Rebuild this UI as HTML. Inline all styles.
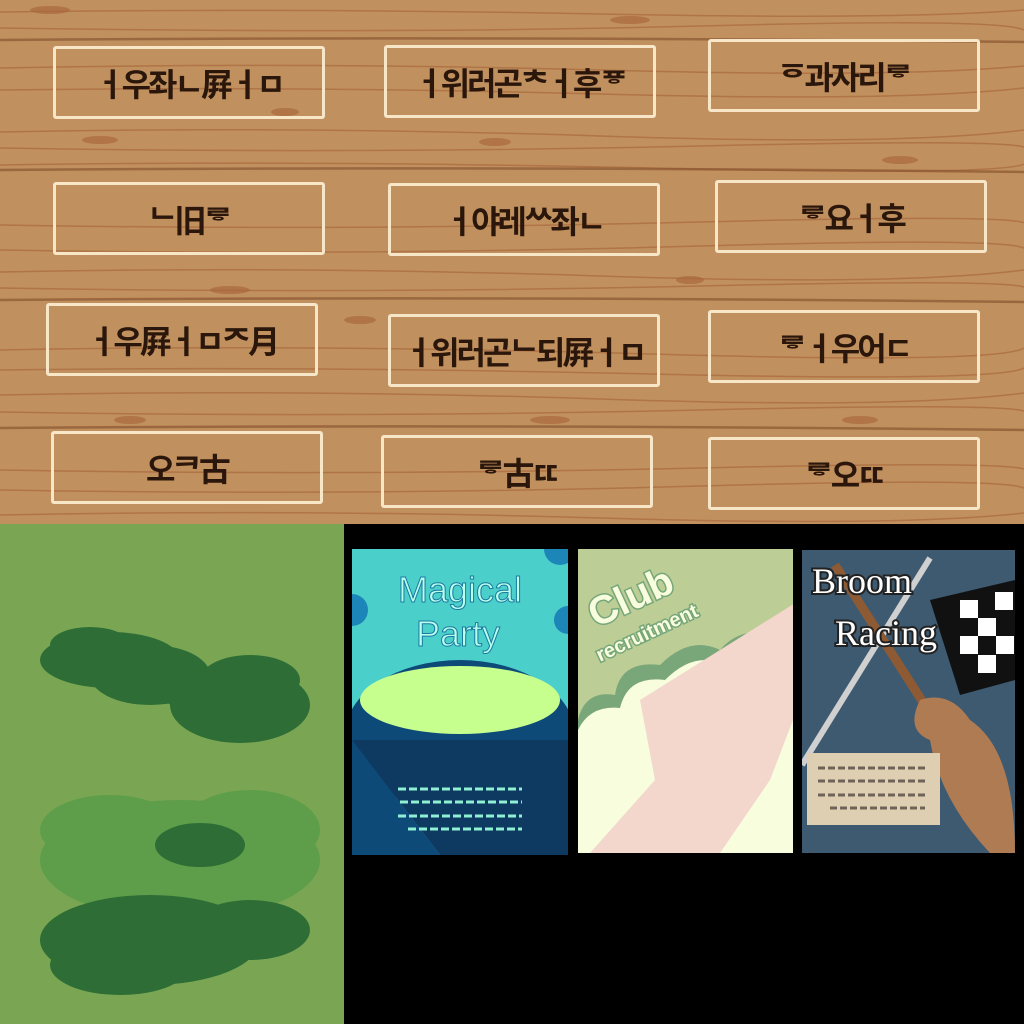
<!DOCTYPE html>
<html><head><meta charset="utf-8"><style>
html,body{margin:0;padding:0;width:1024px;height:1024px;overflow:hidden;background:#000}
.box{position:absolute;width:266px;height:67px;border:3px solid #f7e6c8;border-radius:3px;display:flex;align-items:center;justify-content:center;font-family:"Liberation Sans","Noto Sans CJK KR",sans-serif;font-size:32px;font-weight:bold;color:#2a160a;letter-spacing:-3px;white-space:nowrap;overflow:hidden}
</style></head><body>
<svg width="1024" height="1024" style="position:absolute;left:0;top:0">
<defs>
<clipPath id="c1"><rect x="352" y="549" width="216" height="306"/></clipPath>
<clipPath id="c2"><rect x="578" y="549" width="215" height="304"/></clipPath>
<clipPath id="c3"><rect x="802" y="550" width="213" height="303"/></clipPath>
</defs>
<rect x="0" y="0" width="1024" height="524" fill="#c0905e"/>
<g stroke="#b07446" stroke-width="1.5" fill="none">
<path d="M0 12 Q300 8 600 14 T1024 10"/><path d="M0 28 Q400 34 700 26 T1024 30"/>
<path d="M0 132 Q300 126 600 136 T1024 130"/><path d="M0 148 Q350 154 700 146 T1024 150"/>
<path d="M0 165 Q300 160 650 168 T1024 164"/><path d="M0 272 Q300 266 600 276 T1024 270"/>
<path d="M0 288 Q350 294 700 286 T1024 290"/><path d="M0 395 Q300 389 600 399 T1024 393"/>
<path d="M0 412 Q350 418 700 410 T1024 414"/><path d="M0 515 Q300 509 600 518 T1024 513"/>
<path d="M0 68 Q300 62 600 70 T1024 66"/><path d="M0 225 Q350 231 700 222 T1024 226"/>
<path d="M0 350 Q300 344 650 354 T1024 348"/><path d="M0 470 Q350 476 700 468 T1024 472"/>
<path d="M0 90 Q300 86 600 94 T1024 88"/><path d="M0 250 Q350 256 700 246 T1024 252"/>
<path d="M0 370 Q300 366 650 374 T1024 368"/><path d="M0 490 Q350 496 700 486 T1024 492"/>
</g>
<g stroke="#8a5532" stroke-width="2.5" fill="none" opacity="0.7">
<path d="M0 40 Q500 36 1024 42"/><path d="M0 170 Q500 166 1024 172"/><path d="M0 300 Q500 296 1024 302"/><path d="M0 428 Q500 424 1024 430"/>
</g>
<g fill="#a9683d" opacity="0.7">
<ellipse cx="100" cy="140" rx="18" ry="4"/><ellipse cx="285" cy="112" rx="14" ry="4"/><ellipse cx="495" cy="142" rx="16" ry="4"/>
<ellipse cx="230" cy="290" rx="20" ry="4"/><ellipse cx="360" cy="320" rx="16" ry="4"/><ellipse cx="690" cy="280" rx="14" ry="4"/>
<ellipse cx="900" cy="160" rx="18" ry="4"/><ellipse cx="550" cy="420" rx="20" ry="4"/><ellipse cx="130" cy="420" rx="16" ry="4"/>
<ellipse cx="860" cy="420" rx="18" ry="4"/><ellipse cx="630" cy="20" rx="20" ry="4"/><ellipse cx="50" cy="10" rx="20" ry="4"/>
</g>
<rect x="0" y="524" width="344" height="500" fill="#7aa653"/>
<g fill="#2e6e36">
<ellipse cx="110" cy="660" rx="70" ry="28"/><ellipse cx="150" cy="675" rx="60" ry="30"/><ellipse cx="240" cy="705" rx="70" ry="38"/>
<ellipse cx="200" cy="690" rx="40" ry="22"/><ellipse cx="90" cy="645" rx="40" ry="18"/><ellipse cx="250" cy="680" rx="50" ry="25"/>
</g>
<g fill="#5e9e4a">
<ellipse cx="180" cy="860" rx="140" ry="60"/><ellipse cx="250" cy="830" rx="70" ry="40"/><ellipse cx="110" cy="830" rx="70" ry="35"/>
</g>
<g fill="#2e6e36">
<ellipse cx="200" cy="845" rx="45" ry="22"/>
<ellipse cx="150" cy="940" rx="110" ry="45"/><ellipse cx="250" cy="930" rx="60" ry="30"/><ellipse cx="120" cy="965" rx="70" ry="30"/>
</g>
<!-- poster 1 -->
<g clip-path="url(#c1)">
<rect x="352" y="549" width="216" height="306" fill="#4bcfca"/>
<circle cx="352" cy="610" r="16" fill="#1d86b8"/><circle cx="568" cy="620" r="14" fill="#1d86b8"/><circle cx="568" cy="760" r="14" fill="#1d86b8"/><circle cx="352" cy="760" r="10" fill="#1d86b8"/><circle cx="560" cy="549" r="16" fill="#1d86b8"/>
<ellipse cx="460" cy="735" rx="115" ry="75" fill="#0d4a78"/>
<path d="M352 740 L568 740 L568 855 L440 855 Z" fill="#0e3a62"/>
<path d="M352 740 L440 855 L352 855Z" fill="#0d4a78"/>
<ellipse cx="460" cy="700" rx="100" ry="34" fill="#c6ff8e"/>
<g stroke="#8ff0d4" stroke-width="3" stroke-dasharray="8 3"><line x1="398" y1="789" x2="522" y2="789"/><line x1="400" y1="802" x2="522" y2="802"/><line x1="398" y1="816" x2="522" y2="816"/><line x1="408" y1="829" x2="522" y2="829"/></g>
<text x="460" y="602" text-anchor="middle" font-family="Liberation Sans" font-size="36" fill="#b8ffee" stroke="#1a7aa0" stroke-width="1">Magical</text>
<text x="458" y="646" text-anchor="middle" font-family="Liberation Sans" font-size="36" fill="#b8ffee" stroke="#1a7aa0" stroke-width="1">Party</text>
</g>
<!-- poster 2 -->
<g clip-path="url(#c2)">
<rect x="578" y="549" width="215" height="304" fill="#bccd95"/>
<path d="M578 853 L578 720 Q585 690 615 695 Q620 660 660 665 Q690 635 720 650 Q745 620 793 640 L793 853Z" fill="#7aa77a"/>
<path d="M578 853 L578 730 Q590 705 620 708 Q628 675 665 680 Q695 650 725 665 Q750 635 793 655 L793 853Z" fill="#f8fddd"/>
<path d="M640 700 L800 600 L793 720 L770 780 L720 853 L590 853 L655 780 Z" fill="#f3d6cc"/>
<text x="596" y="628" font-family="Liberation Sans" font-weight="bold" font-size="40" fill="#f8fddd" stroke="#76a67a" stroke-width="3" paint-order="stroke" transform="rotate(-25 596 628)">Club</text>
<text x="600" y="662" font-family="Liberation Sans" font-weight="bold" font-size="20" fill="#f8fddd" stroke="#76a67a" stroke-width="3" paint-order="stroke" transform="rotate(-25 600 662)">recruitment</text>
</g>
<!-- poster 3 -->
<g clip-path="url(#c3)">
<rect x="802" y="550" width="213" height="303" fill="#3e5a70"/>
<line x1="930" y1="558" x2="802" y2="765" stroke="#d0d0d0" stroke-width="6"/>
<path d="M930 600 L1015 580 L1015 680 L960 695 Z" fill="#111"/>
<g fill="#fff"><rect x="960" y="600" width="18" height="18"/><rect x="995" y="592" width="18" height="18"/><rect x="978" y="618" width="18" height="18"/><rect x="960" y="636" width="18" height="18"/><rect x="996" y="636" width="18" height="18"/><rect x="978" y="655" width="18" height="18"/></g>
<line x1="835" y1="565" x2="960" y2="760" stroke="#8e5a34" stroke-width="9"/>
<path d="M920 700 Q950 690 970 720 Q1015 750 1015 853 L990 853 Q940 800 930 740 Q905 730 920 700Z" fill="#af7b53"/>
<rect x="807" y="753" width="133" height="72" fill="#dfcfb2"/>
<g stroke="#6f6258" stroke-width="3" stroke-dasharray="7 3"><line x1="818" y1="768" x2="925" y2="768"/><line x1="818" y1="781" x2="925" y2="781"/><line x1="818" y1="795" x2="925" y2="795"/><line x1="830" y1="808" x2="925" y2="808"/></g>
<text x="812" y="593" font-family="Liberation Serif" font-size="36" fill="#fff" stroke="#222" stroke-width="4" paint-order="stroke">Broom</text>
<text x="835" y="645" font-family="Liberation Serif" font-size="36" fill="#fff" stroke="#222" stroke-width="4" paint-order="stroke">Racing</text>
</g>
</svg>
<div class="box" style="left:53px;top:46px">ㅓ우좌ㄴ屛ㅓㅁ</div>
<div class="box" style="left:384px;top:45px">ㅓ위러곤ᅕㅓ후ᅗ</div>
<div class="box" style="left:708px;top:39px">ᅙ과자리ᄛ</div>
<div class="box" style="left:53px;top:182px">ᄂ旧ᄛ</div>
<div class="box" style="left:388px;top:183px">ㅓ야레ᄊ좌ㄴ</div>
<div class="box" style="left:715px;top:180px">ᄛ요ㅓ후</div>
<div class="box" style="left:46px;top:303px">ㅓ우屛ㅓㅁᄌ月</div>
<div class="box" style="left:388px;top:314px">ㅓ위러곤ᄂ되屛ㅓㅁ</div>
<div class="box" style="left:708px;top:310px">ᄛㅓ우어ㄷ</div>
<div class="box" style="left:51px;top:431px">오ᄏ古</div>
<div class="box" style="left:381px;top:435px">ᄛ古ㄸ</div>
<div class="box" style="left:708px;top:437px">ᄛ오ㄸ</div>
</body></html>
